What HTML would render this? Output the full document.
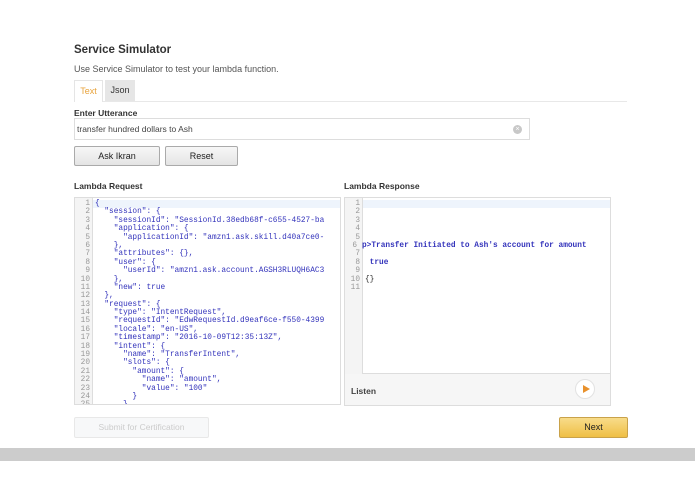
<!DOCTYPE html>
<html><head><meta charset="utf-8"><style>
*{margin:0;padding:0;box-sizing:border-box}
body{width:695px;height:494px;background:#fff;font-family:"Liberation Sans",Arial,sans-serif;position:relative;overflow:hidden;color:#333}
.a{position:absolute}
h1{position:absolute;left:74px;top:44px;font-size:11.5px;font-weight:bold;color:#333}
.sub{left:74px;top:64px;font-size:9px;color:#555}
.tab{top:80px;height:21px;font-size:9px;line-height:21px;text-align:center}
.lbl{font-size:8.5px;font-weight:bold;color:#333}
.btn{top:146px;height:20px;border:1px solid #aaa;border-radius:2px;background:linear-gradient(#f7f7f7,#e4e4e4);font-size:9px;line-height:18px;text-align:center;color:#222}
.panel{border:1px solid #ddd;background:#fff;overflow:hidden}
.gut{position:absolute;left:0;top:0;bottom:0;width:18px;background:#f4f4f4;border-right:1px solid #ddd}
.code{position:absolute;left:0;top:2px;right:0;font-family:"Liberation Mono",monospace;font-size:7.8px}
.code div{height:8.4px;line-height:8.4px;white-space:pre;color:#3333bb}
.code i{font-style:normal;display:inline-block;width:15px;text-align:right;color:#999;margin-right:5px;font-weight:normal}
</style></head><body>
<h1>Service Simulator</h1>
<div class="a sub">Use Service Simulator to test your lambda function.</div>
<div class="a" style="left:74px;top:101px;width:553px;height:1px;background:#e8e8e8"></div>
<div class="a tab" style="left:74px;width:29px;border:1px solid #e5e5e5;border-bottom:none;background:#fff;color:#e8a33c;height:22px">Text</div>
<div class="a tab" style="left:105px;width:30px;background:#e6e6e6;color:#333">Json</div>
<div class="a lbl" style="left:74px;top:108px">Enter Utterance</div>
<div class="a" style="left:74px;top:118px;width:456px;height:22px;border:1px solid #ddd;font-size:8.5px;line-height:20px;padding-left:2px;color:#444">transfer hundred dollars to Ash</div>
<div class="a" style="left:513px;top:125px;width:9px;height:9px;border-radius:50%;background:#c8c8c8;color:#fff;font-size:7px;line-height:9px;text-align:center">×</div>
<div class="a btn" style="left:74px;width:86px">Ask Ikran</div>
<div class="a btn" style="left:165px;width:73px">Reset</div>
<div class="a lbl" style="left:74px;top:181px">Lambda Request</div>
<div class="a lbl" style="left:344px;top:181px">Lambda Response</div>
<div class="a panel" style="left:74px;top:197px;width:267px;height:208px">
<div class="gut"></div>
<div class="a" style="left:18px;top:2px;right:0;height:8px;background:#eef4fc"></div>
<div class="code">
<div><i>1</i>{</div>
<div><i>2</i>  "session": {</div>
<div><i>3</i>    "sessionId": "SessionId.38edb68f-c655-4527-ba</div>
<div><i>4</i>    "application": {</div>
<div><i>5</i>      "applicationId": "amzn1.ask.skill.d40a7ce0-</div>
<div><i>6</i>    },</div>
<div><i>7</i>    "attributes": {},</div>
<div><i>8</i>    "user": {</div>
<div><i>9</i>      "userId": "amzn1.ask.account.AGSH3RLUQH6AC3</div>
<div><i>10</i>    },</div>
<div><i>11</i>    "new": true</div>
<div><i>12</i>  },</div>
<div><i>13</i>  "request": {</div>
<div><i>14</i>    "type": "IntentRequest",</div>
<div><i>15</i>    "requestId": "EdwRequestId.d9eaf6ce-f550-4399</div>
<div><i>16</i>    "locale": "en-US",</div>
<div><i>17</i>    "timestamp": "2016-10-09T12:35:13Z",</div>
<div><i>18</i>    "intent": {</div>
<div><i>19</i>      "name": "TransferIntent",</div>
<div><i>20</i>      "slots": {</div>
<div><i>21</i>        "amount": {</div>
<div><i>22</i>          "name": "amount",</div>
<div><i>23</i>          "value": "100"</div>
<div><i>24</i>        }</div>
<div><i>25</i>      }</div>
</div>
</div>
<div class="a panel" style="left:344px;top:197px;width:267px;height:209px;background:#f6f6f6">
<div class="a" style="left:0;top:0;right:0;height:176px;background:#fff;border-bottom:1px solid #ddd"></div>
<div class="a" style="left:0;top:0;width:18px;height:176px;background:#f4f4f4;border-right:1px solid #ddd"></div>
<div class="a" style="left:18px;top:2px;right:0;height:8px;background:#eef4fc"></div>
<div class="code" style="font-weight:bold">
<div><i>1</i></div>
<div><i>2</i></div>
<div><i>3</i></div>
<div><i>4</i></div>
<div><i>5</i></div>
<div style="margin-left:-3px"><i>6</i>p>Transfer Initiated to Ash's account for amount</div>
<div><i>7</i></div>
<div><i>8</i> true</div>
<div><i>9</i></div>
<div><i>10</i><span style="color:#333;font-weight:normal">{}</span></div>
<div><i>11</i></div>
</div>
<div class="a" style="left:6px;top:188px;font-size:8.5px;font-weight:bold;color:#444">Listen</div>
<div class="a" style="left:230px;top:181px;width:20px;height:20px;border-radius:50%;background:#fff;border:1px solid #e2e2e2"></div>
<div class="a" style="left:238px;top:187px;width:0;height:0;border-left:7px solid #e8912c;border-top:4px solid transparent;border-bottom:4px solid transparent"></div>
</div>
<div class="a" style="left:74px;top:417px;width:135px;height:21px;border:1px solid #e8e8e8;border-radius:2px;background:#f7f8f9;font-size:8.5px;line-height:19px;text-align:center;color:#ccc">Submit for Certification</div>
<div class="a" style="left:559px;top:417px;width:69px;height:21px;border:1px solid #c9a24a;border-radius:2px;background:linear-gradient(#f8dc8a,#efbf45);font-size:9px;line-height:19px;text-align:center;color:#222">Next</div>
<div class="a" style="left:0;top:448px;width:695px;height:13px;background:#cccccc"></div>
</body></html>
